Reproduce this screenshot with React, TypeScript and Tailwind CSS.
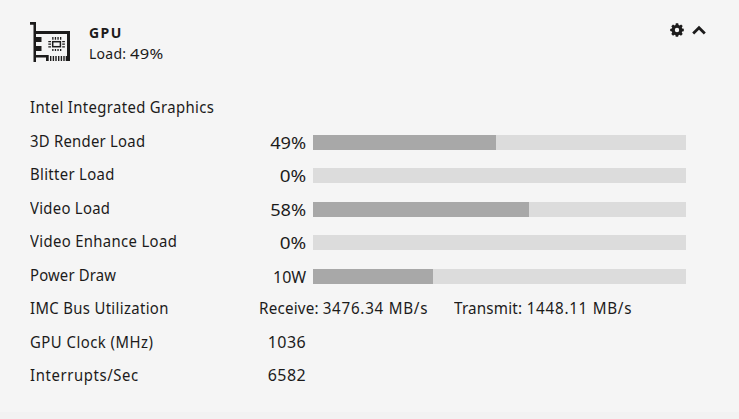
import React from "react";

type Meter = { label: string; track: string; value: string; stretch: string; fill: string };

const meters: Meter[] = [
  { label: "3D Render Load", track: "tracking-[0.26px]", value: "49%", stretch: "pt-[5px] scale-x-[1.14]", fill: "w-[183px]" },
  { label: "Blitter Load", track: "tracking-[0.35px]", value: "0%", stretch: "pt-[4px] scale-x-[1.18]", fill: "w-0" },
  { label: "Video Load", track: "tracking-[0.3px]", value: "58%", stretch: "pt-[4px] scale-x-[1.14]", fill: "w-[216px]" },
  { label: "Video Enhance Load", track: "tracking-[0.36px]", value: "0%", stretch: "pt-[4px] scale-x-[1.18]", fill: "w-0" },
  { label: "Power Draw", track: "tracking-[0.16px]", value: "10W", stretch: "pt-[4px] scale-x-100", fill: "w-[120px]" },
];

function CardIcon() {
  return (
    <svg width="42" height="42" viewBox="29 21 42 42" fill="#1c1b1b" className="shrink-0">
      <path d="M30 22h6v9h34v30h-3V34H36v3h5.500v5H36v4h5.500v5H36v4h12.700v6h-2.700v-3.500h-10V62h-2.500V24.700H30z" />
      <path d="M50 56h1.400v5H50zM52.700 56h1.400v5h-1.400zM55.300 56h1.400v5h-1.400zM58 56h1.400v5H58zM60.700 56h1.400v5h-1.400zM63.300 56h1.400v5h-1.400zM65.700 56h1.400v5h-1.400z" />
      <rect x="52.700" y="41.700" width="7.700" height="5" fill="none" stroke="#1c1b1b" strokeWidth="1.500" />
      <path d="M52.200 37h1.300v2.800h-1.300zM54.800 37h1.300v2.800h-1.300zM57.400 37h1.300v2.800h-1.300zM60 37h1.300v2.800H60zM52.200 49h1.300v2h-1.300zM54.800 49h1.300v2h-1.300zM57.400 49h1.300v2h-1.300zM60 49h1.300v2H60zM48.300 41h2.700v1.200h-2.700zM48.300 43.600h2.700v1.200h-2.700zM48.300 46.200h2.700v1.200h-2.700zM62.200 41h2.700v1.200h-2.700zM62.200 43.600h2.700v1.200h-2.700zM62.200 46.200h2.700v1.200h-2.700z" />
    </svg>
  );
}

function Gear() {
  return (
    <svg width="14" height="14" viewBox="-7 -7 14 14" fill="#1c1b1b">
      <path fillRule="evenodd" d="M-1.200-6.700h2.400l.4 1.700 1 .4 1.500-.9L5.700-3.900l-.9 1.400.4 1 1.600.3v2.400L5.200 1.500l-.4 1 .9 1.500L4 5.700l-1.500-.9-1 .4-.4 1.600h-2.400L-1.500 5.200l-1-.4-1.500.9L-5.700 4l.9-1.500-.4-1-1.600-.4v-2.200l1.600-.3.4-1-.9-1.400L-4-5.500l1.500.9 1-.4zM0-2.200A2.200 2.200 0 1 0 0 2.200 2.200 2.200 0 1 0 0-2.200z" />
    </svg>
  );
}

function Row({ label, track, children }: { label: string; track: string; children?: React.ReactNode }) {
  return (
    <div className="flex h-[33.5px] items-center whitespace-nowrap">
      <span className={"w-[220px] shrink-0 origin-left scale-x-[0.93] " + track}>{label}</span>
      {children}
    </div>
  );
}

export default function App() {
  return (
    <div className="h-[419px] w-[739px] overflow-hidden bg-[#f2f2f2] font-['Noto_Sans',sans-serif] text-base text-[#1c1b1b]">
      <section className="h-[412px] bg-[#f5f5f5] pl-[30px]">
        <header className="flex h-[90.7px] items-start pt-[21px]">
          <div className="-ml-px">
            <CardIcon />
          </div>
          <div className="ml-[18px] grow pt-px">
            <h2 className="text-[14px] font-bold leading-[21px] tracking-[1.4px]">GPU</h2>
            <p className="text-[14px] leading-[21px] tracking-[0.25px]">
              Load: <span className="inline-block origin-left scale-x-[1.18]">49%</span>
            </p>
          </div>
          <div className="flex items-center gap-2 pr-[33px] pt-[2px]">
            <Gear />
            <svg width="14" height="14" viewBox="0 0 14 14" fill="none" stroke="#1c1b1b" strokeWidth="2.800">
              <path d="M1.200 10.500 7 4.700l5.800 5.800" />
            </svg>
          </div>
        </header>
        <Row label="Intel Integrated Graphics" track="tracking-[0.38px]" />
        {meters.map((m) => (
          <Row key={m.label} label={m.label} track={m.track}>
            <span className={"w-[56px] origin-right text-right tracking-[-0.1px] " + m.stretch}>{m.value}</span>
            <div className="ml-[7px] mt-[3px] h-[15px] w-[373px] bg-[#dcdcdc]">
              <div className={"h-full bg-[#a8a8a8] " + m.fill} />
            </div>
          </Row>
        ))}
        <Row label="IMC Bus Utilization" track="tracking-[0.37px]">
          <span className="ml-[9px] flex w-[195px] origin-left scale-x-[0.95]">
            <span className="w-[67px] tracking-[0.2px]">Receive:</span>
            <span className="tracking-[0.77px]">3476.34 MB/s</span>
          </span>
          <span className="flex origin-left scale-x-[0.95]">
            <span className="w-[76.5px] tracking-[0.2px]">Transmit:</span>
            <span className="tracking-[0.77px]">1448.11 MB/s</span>
          </span>
        </Row>
        <Row label="GPU Clock (MHz)" track="tracking-[0.52px]">
          <span className="w-[56px] text-right tracking-[0.4px]">1036</span>
        </Row>
        <Row label="Interrupts/Sec" track="tracking-[0.65px]">
          <span className="w-[56px] text-right tracking-[0.4px]">6582</span>
        </Row>
      </section>
    </div>
  );
}
